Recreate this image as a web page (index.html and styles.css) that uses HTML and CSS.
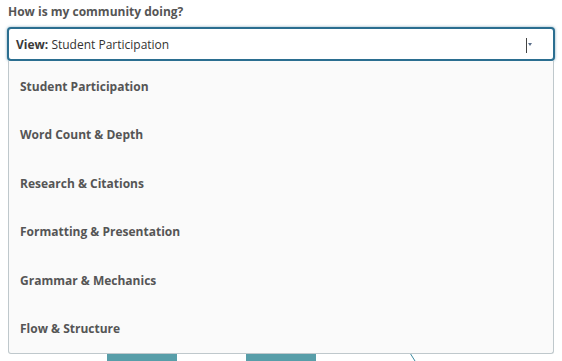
FILE: index.html
```html
<!DOCTYPE html>
<html>
<head>
<meta charset="utf-8">
<link rel="stylesheet" href="styles.css">
</head>
<body>
<div class="page">
  <div class="title">How is my community doing?</div>
  <div class="picker">
    <div class="select">
      <span class="label">View:</span>&nbsp;<span class="value">Student Participation</span>
      <svg class="caret" width="8" height="16" viewBox="0 0 8 16">
        <rect x="0" y="0" width="1" height="15" fill="#444"/>
        <path d="M2 5 L6 5 L4 8 Z" fill="#5a6e8a"/>
      </svg>
    </div>
    <div class="chart">
      <div class="bar b1"></div>
      <div class="bar b2"></div>
      <svg class="line" width="10" height="10" viewBox="0 0 10 10"><path d="M1 0 L6 8" stroke="#3d8aa0" stroke-width="1" fill="none"/></svg>
    </div>
    <ul class="menu">
      <li>Student Participation</li>
      <li>Word Count &amp; Depth</li>
      <li>Research &amp; Citations</li>
      <li>Formatting &amp; Presentation</li>
      <li>Grammar &amp; Mechanics</li>
      <li>Flow &amp; Structure</li>
    </ul>
  </div>
</div>
</body>
</html>
```
FILE: styles.css
```css
html, body {
  margin: 0;
  padding: 0;
  background: #fff;
}
body {
  font-family: "Open Sans", "Noto Sans", sans-serif;
  width: 562px;
  height: 361px;
  overflow: hidden;
}
.page {
  padding: 4px 7px 0 7px;
}
.title {
  font-size: 12px;
  font-weight: 700;
  color: #555;
  line-height: 16px;
  height: 16px;
  padding-left: 1px;
}
.picker {
  position: relative;
  margin-top: 7px;
  width: 548px;
}
.select {
  position: relative;
  box-sizing: border-box;
  height: 34px;
  border: 2px solid #2b6e90;
  border-radius: 4px;
  box-shadow: 0 0 3px rgba(43, 110, 144, 0.6);
  background: #fff;
  display: flex;
  align-items: center;
  padding-left: 7px;
  font-size: 12px;
  color: #333;
}
.label {
  font-weight: 700;
  color: #3a3a3a;
}
.value {
  color: #333;
}
.caret {
  position: absolute;
  right: 19px;
  top: 9px;
}
.chart {
  position: relative;
  height: 300px;
}
.bar {
  position: absolute;
  bottom: 0;
  height: 60px;
  width: 70px;
  background: #589ea9;
}
.b1 { left: 100px; }
.b2 { left: 239px; }
.line {
  position: absolute;
  left: 402px;
  bottom: -2px;
}
.menu {
  position: absolute;
  top: 34px;
  left: 1px;
  width: 546px;
  height: 293px;
  box-sizing: border-box;
  margin: 0;
  padding: 1px 0 0 0;
  list-style: none;
  background: #fafafa;
  border: 1px solid #bfc8cc;
  border-top: none;
  border-radius: 0 0 3px 3px;
  display: flex;
  flex-direction: column;
}
.menu li {
  flex: 1;
  display: flex;
  align-items: center;
  padding-left: 11px;
  font-size: 12px;
  font-weight: 700;
  color: #555;
}
```
